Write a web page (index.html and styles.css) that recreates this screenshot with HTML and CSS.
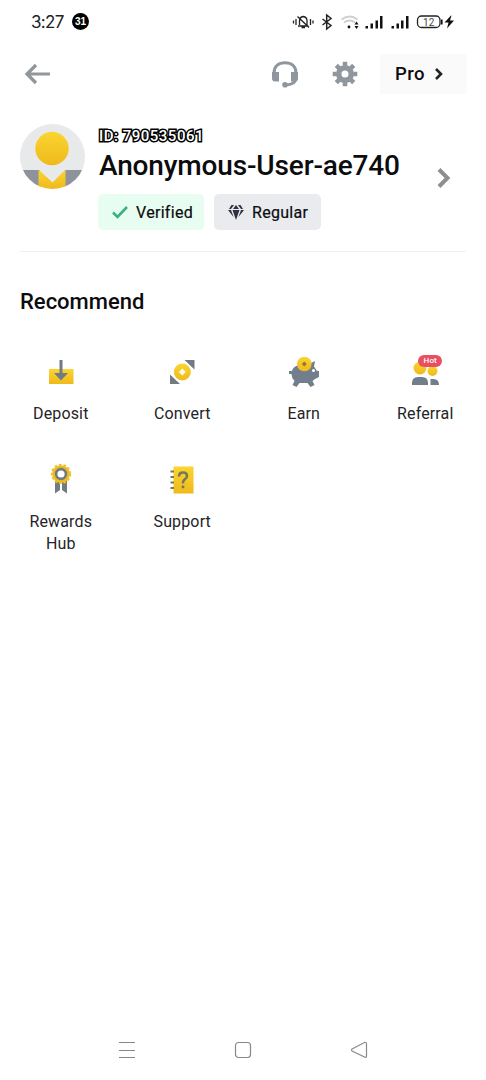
FILE: index.html
```html
<!DOCTYPE html>
<html lang="en">
<head>
<meta charset="utf-8">
<title>Account</title>
<link rel="stylesheet" href="styles.css">
</head>
<body>
<div class="screen">
  <div class="status">
    <span class="time">3:27</span><span class="date">31</span>
    <svg class="system" width="166" height="18" viewBox="0 0 166 18">
      <g fill="none" stroke="#222" stroke-width="1.3">
        <path d="M1.500 7.500v3M4 6v6M18.500 6v6M21 7.500v3M6 13h10.500M7.500 12V8q0-4 3.700-4.500Q15 4 15 8v4M9.500 14.500h3.500M5.500 3.500l11.500 11"/>
        <path d="M30.500 6l8.500 6.500-4.300 3.500V2L39 5.500 30.500 12" stroke-width="1.500"/>
        <path d="M49.500 6.500q8.500-6 16 0M52 9.500q5.500-4 11 0" stroke="#d0d0d0" stroke-width="2"/>
        <rect x="125.500" y="3" width="22.500" height="11.500" rx="4"/>
      </g>
      <g fill="#111">
        <circle cx="57" cy="14" r="1.400"/><path d="M62.500 11.500l2-3 2 3zM62.500 13h4l-2 3z"/>
        <path d="M73.500 13H76v2.500h-2.500zM78.500 10.500H81v5h-2.500zM83.500 7.500H86v8h-2.500zM88 3h2.500v12.500H88zM99.500 13h2.500v2.500h-2.500zM104.500 10.500h2.500v5h-2.500zM109 7.500h2.500v8H109zM114 3h2.500v12.500H114zM149 6.500h1.600v5H149zM159 2.500l-6.500 7h4l-1.500 6 7-8h-4l1.500-5z"/>
      </g>
      <text class="charge" x="136.700" y="12.500" text-anchor="middle">12</text>
    </svg>
  </div>
  <header class="header">
    <svg class="back" width="28" height="24" viewBox="0 0 28 24" fill="none" stroke="#91969b" stroke-width="3.200"><path d="M27 12H4M13 3L4 12l9 9"/></svg>
    <svg class="headset" width="28" height="28" viewBox="0 0 28 28"><path d="M3 15v-2C3 6 8 2.700 14 2.700S25 6 25 13v5c0 4-4 6.500-10 7" fill="none" stroke="#8f969e" stroke-width="3"/><path d="M1 12h7v9.500H4q-3 0-3-3zM20 12h7v6.500q0 3-3 3h-4z" fill="#8f969e"/><circle cx="14" cy="24.700" r="2.800" fill="#8f969e"/></svg>
    <svg class="gear" width="26" height="26" viewBox="-13 -13 26 26" fill="none" stroke="#8f969e"><circle r="6.300" stroke-width="5.500"/><path d="M0-12.300v4M0 12.300v-4M12.300 0h-4M-12.300 0h4M-8.700-8.700l3 3M8.700 8.700l-3-3M8.700-8.700l-3 3M-8.700 8.700l3-3" stroke-width="4.500"/></svg>
    <button class="pro"><span>Pro</span><svg width="10" height="12" viewBox="0 0 10 12" fill="none" stroke="#222" stroke-width="2.600"><path d="M2 1l5 5-5 5"/></svg></button>
  </header>
  <section class="profile">
    <svg class="avatar" width="65" height="65" viewBox="0 0 65 65">
      <defs>
        <clipPath id="disc"><circle cx="32.500" cy="32.500" r="32.500"/></clipPath>
        <linearGradient id="gold" x2="0" y2="1"><stop stop-color="#fad532"/><stop offset="1" stop-color="#efb91c"/></linearGradient>
      </defs>
      <g clip-path="url(#disc)"><path fill="#e8e9eb" d="M0 0h65v65H0z"/><path fill="#8e939b" d="M0 46h20v19H0zM45 46h20v19H45z"/><path fill="url(#gold)" d="M18.500 45.500l14 13 13-13V65h-27z"/><circle cx="32" cy="24.500" r="16.700" fill="url(#gold)"/></g>
    </svg>
    <div class="identity">
      <div class="uid">ID: 790535061</div>
      <h1 class="name">Anonymous-User-ae740</h1>
      <div class="badges">
        <span class="badge verified"><svg width="18" height="16" viewBox="0 0 18 16" fill="none" stroke="#38b082" stroke-width="2.600"><path d="M2 8.500L6.500 13 16 3"/></svg><span>Verified</span></span>
        <span class="badge regular"><svg width="18" height="17" viewBox="0 0 18 17" fill="#303040"><path d="M5.500 6h7L9 16zM6 5l3-4 3 4zM4.500 1H7L4 5H2zM13.500 1H11l3 4h2zM1 6h3l2.500 7zM17 6h-3l-2.500 7z"/></svg><span>Regular</span></span>
      </div>
    </div>
    <svg class="more" width="16" height="22" viewBox="0 0 16 22" fill="none" stroke="#8e8e90" stroke-width="4"><path d="M3 2.500l8.500 8.500L3 19.500"/></svg>
  </section>
  <main>
    <h2 class="title">Recommend</h2>
    <div class="grid">
      <a class="item"><svg class="icon" viewBox="0 0 32 32"><path fill="url(#gold)" d="M4 13h24.500v15H4z"/><path fill="#727b84" d="M14.500 4h3v13H23l-7 7.500L9 17h5.500z"/></svg><span>Deposit</span></a>
      <a class="item"><svg class="icon" viewBox="0 0 32 32"><path fill="#727b84" d="M18.500 4H28.500v9.500zM4 18.500V28h10z"/><circle cx="16.300" cy="16" r="8.500" fill="url(#gold)"/><path fill="#fffbe0" d="M16.300 12.500l3.500 3.500-3.500 3.500-3.500-3.500z"/></svg><span>Convert</span></a>
      <a class="item"><svg class="icon" viewBox="0 0 32 32"><path fill="#727e8b" d="M1 15h3c1-4 5-6 9-6h6l8-4-1 5.500 3 4.500h2v6l-4 2-2.500 2 2 4-4 2-3-4h-8l-3 4-4-2 2-4q-3-3-3-7H1z"/><circle cx="25.500" cy="14.500" r="1.500" fill="#fff"/><circle cx="16.300" cy="8" r="7.300" fill="url(#gold)"/><path fill="#94772a" d="M16.300 5.500l2.500 2.500-2.500 2.500L13.800 8z"/></svg><span>Earn</span></a>
      <a class="item"><span class="icon-wrap"><svg class="icon" viewBox="0 0 32 32"><circle cx="11" cy="12" r="6.500" fill="url(#gold)"/><circle cx="23.500" cy="15" r="5" fill="url(#gold)"/><path fill="#727e8b" d="M3 29v-2q0-6 6-6h4q6 0 6 6v2zM21.500 29v-6h3q5.500 0 5.500 6z"/></svg><b class="hot">Hot</b></span><span>Referral</span></a>
      <a class="item"><svg class="icon" viewBox="0 0 32 32"><path fill="#727b84" d="M10 17h5v9l-5 3.500zM17 17h5v12.500L17 26z"/><circle cx="16" cy="10" r="8.800" fill="#edbd1c"/><circle cx="16" cy="10" r="9.300" fill="none" stroke="#edbd1c" stroke-width="1.600" stroke-dasharray="2.700 1.900"/><circle cx="16" cy="10" r="4.900" fill="#fff" stroke="#727b84" stroke-width="2.600"/></svg><span>Rewards<br>Hub</span></a>
      <a class="item"><svg class="icon" viewBox="0 0 32 32"><path fill="url(#gold)" d="M7.500 2.500H27.500v27H7.500z"/><path fill="none" stroke="#727b56" stroke-width="2" d="M4.500 7.500h3.500M4.500 13h3.500M4.500 18.500h3.500M4.500 24h3.500"/><path fill="none" stroke="#727b56" stroke-width="2.600" d="M13 12.500q0-4 4-4t4 3.500q0 2-2 3.200t-2 3.300v1M17 21.500v2.700"/></svg><span>Support</span></a>
    </div>
  </main>
  <nav class="nav">
    <svg viewBox="0 0 18 18"><path d="M1 1.500h16M1 9.500h16M1 16.500h16"/></svg>
    <svg viewBox="0 0 18 18"><rect x="1.500" y="1.500" width="15" height="15" rx="3"/></svg>
    <svg viewBox="0 0 18 18"><path d="M2 8L14.500 1.500q2-.5 2 1.500v12q0 2-2 1L2 10q-1-1 0-2z"/></svg>
  </nav>
</div>
</body>
</html>
```
FILE: styles.css
```css
* { box-sizing: border-box; }
body { margin: 0; background: #fff; color: #0c0c0e; font-family: Roboto, sans-serif; }
svg { display: block; flex-shrink: 0; }
h1, h2 { margin: 0; font-weight: 500; white-space: nowrap; }
.screen { width: 486px; height: 1080px; display: flex; flex-direction: column; }
.status { height: 43px; display: flex; align-items: center; padding-left: 31px; }
.time { width: 41px; font-family: Inter, sans-serif; font-size: 17px; letter-spacing: -.7px; color: #222; }
.date { width: 17px; height: 17px; border-radius: 50%; background: #000; color: #fff; font: bold 10px/17px "Liberation Sans", sans-serif; text-align: center; }
.system { margin-left: 203px; }
.charge { font: 10px Roboto, sans-serif; fill: #444; }
.header { height: 61px; display: flex; align-items: center; padding: 0 19px 0 23px; }
.headset { margin-left: 220px; }
.gear { margin-left: 33px; }
.pro { margin-left: auto; width: 87px; height: 40px; border: 0; border-radius: 3px; background: #fafafa; display: flex; align-items: center; gap: 9px; padding: 0 15px; font: 500 18.500px/24px Roboto, sans-serif; color: #0c0c0e; letter-spacing: .4px; }
.profile { height: 148px; margin: 0 20px; padding-top: 20px; display: flex; border-bottom: 1px solid #f0f0f1; }
.identity { margin-left: 13px; width: 310px; }
.uid { height: 23px; font: 500 15px/24px Roboto, sans-serif; color: #fff; letter-spacing: .5px; padding-left: 1px; -webkit-text-stroke: 3px #000; paint-order: stroke fill; white-space: nowrap; }
.name { height: 37px; padding-left: 1px; font-size: 28px; line-height: 37px; letter-spacing: -.15px; }
.badges { margin-top: 10px; display: flex; gap: 10px; }
.badge { height: 36px; display: flex; align-items: center; gap: 7px; border-radius: 5px; padding-left: 13px; font-size: 16px; letter-spacing: .3px; white-space: nowrap; -webkit-text-stroke: .2px; }
.verified { width: 106px; background: #e8fdf1; }
.regular { width: 107px; background: #eaebee; }
.more { margin: 43px 0 0 28px; }
.title { padding: 36px 0 0 20px; font-size: 22px; line-height: 28px; letter-spacing: 0; }
.grid { display: grid; grid-template-columns: repeat(4, 121.500px); grid-auto-rows: 108px; margin-top: 40px; }
.item { display: flex; flex-direction: column; align-items: center; gap: 15px; font-size: 16px; line-height: 22px; text-align: center; letter-spacing: .15px; color: #242427; }
.icon { width: 32px; height: 32px; }
.icon-wrap { position: relative; }
.hot { position: absolute; left: 9px; top: -1px; width: 24px; height: 12px; border-radius: 6px; background: #e84f62; color: #fff; font: 500 8px/12px Roboto, sans-serif; }
.nav { margin-top: auto; height: 60px; display: flex; align-items: center; justify-content: center; gap: 98px; }
.nav svg { width: 18px; height: 18px; fill: none; stroke: #888; stroke-width: 1.200; }
```
